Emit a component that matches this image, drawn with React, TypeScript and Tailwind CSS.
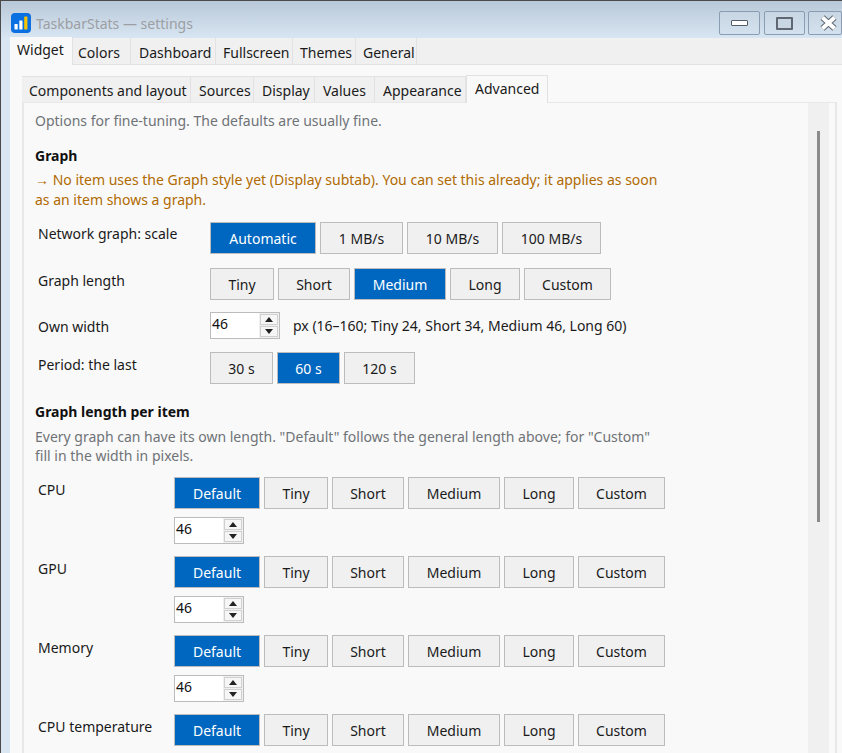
import React from 'react';

const mainTabs = [
  { label: 'Widget', cls: 'w-[63px] pl-[7px] h-[28px] bg-[#f9f9f9] border-b-0 -mb-[1px] pt-[3px]' },
  { label: 'Colors', cls: 'w-[58px] pl-[5px] h-[26px] bg-[#f0f0f0] pt-[5px]' },
  { label: 'Dashboard', cls: 'w-[85px] pl-[8px] h-[26px] bg-[#f0f0f0] pt-[5px]' },
  { label: 'Fullscreen', cls: 'w-[77px] pl-[7px] h-[26px] bg-[#f0f0f0] pt-[5px]' },
  { label: 'Themes', cls: 'w-[63px] pl-[7px] h-[26px] bg-[#f0f0f0] pt-[5px]' },
  { label: 'General', cls: 'w-[61px] pl-[7px] h-[26px] bg-[#f0f0f0] pt-[5px]' },
];

const subTabs = [
  { label: 'Components and layout', cls: 'w-[169px] pl-[7px]' },
  { label: 'Sources', cls: 'w-[63px] pl-[8px]' },
  { label: 'Display', cls: 'w-[61px] pl-[8px]' },
  { label: 'Values', cls: 'w-[60px] pl-[8px]' },
  { label: 'Appearance', cls: 'w-[91px] pl-[8px]' },
];

interface Opt {
  label: string;
  w: string;
  active?: boolean;
}

const OptionRow: React.FC<{ options: Opt[] }> = ({ options }) => (
  <div className="flex gap-[4px]">
    {options.map((o) => (
      <button
        key={o.label}
        className={`h-[32px] border border-[#bcbcbc] pt-[1px] text-center ${o.w} ${o.active ? 'bg-[#0067c0] text-white' : 'bg-[#f0f0f0] text-[#1a1a1a]'}`}
      >
        {o.label}
      </button>
    ))}
  </div>
);

const SpinBox: React.FC = () => (
  <div className="flex h-[27px] w-[70px] items-stretch border border-[#bcbcbc] bg-white">
    <span className="flex-1 pl-[1px] leading-[22px] text-[#111]">46</span>
    <div className="flex w-[20px] flex-col gap-[1px] bg-[#f0f0f0] px-[1px] py-[1px]">
      <div className="flex h-[11px] items-center justify-center border border-[#d0d0d0] bg-[#f6f6f6]">
        <svg width="8" height="5" viewBox="0 0 8 5"><path d="M4 0 L8 5 L0 5 Z" fill="#222" /></svg>
      </div>
      <div className="flex h-[11px] items-center justify-center border border-[#d0d0d0] bg-[#f6f6f6]">
        <svg width="8" height="5" viewBox="0 0 8 5"><path d="M0 0 L8 0 L4 5 Z" fill="#222" /></svg>
      </div>
    </div>
  </div>
);

const perItemOptions: Opt[] = [
  { label: 'Default', w: 'w-[86px]', active: true },
  { label: 'Tiny', w: 'w-[64px]' },
  { label: 'Short', w: 'w-[72px]' },
  { label: 'Medium', w: 'w-[92px]' },
  { label: 'Long', w: 'w-[70px]' },
  { label: 'Custom', w: 'w-[87px]' },
];

const PerItem: React.FC<{ label: string; spin?: boolean }> = ({ label, spin = true }) => (
  <div className="flex h-[79px]">
    <div className="w-[139px] pl-[3px] pt-[3px] leading-[20px]">{label}</div>
    <div className="flex flex-col gap-[8px]">
      <OptionRow options={perItemOptions} />
      {spin && <SpinBox />}
    </div>
  </div>
);

const WinButton: React.FC<{ children: React.ReactNode; w: string }> = ({ children, w }) => (
  <div className={`flex h-[24px] items-center justify-center rounded-[2px] border border-[#8b9db3] bg-gradient-to-b from-[#c8d5e3] to-[#d3e0ee] ${w}`}>
    {children}
  </div>
);

export default function App() {
  return (
    <div
      className="flex h-[753px] w-[842px] flex-col overflow-hidden border-l border-t border-[#4a4a4a] bg-[#dae7f3] text-[14px] text-[#1a1a1a]"
      style={{ fontFamily: '"Noto Sans", "Open Sans", sans-serif' }}
    >
      {/* title bar */}
      <div className="flex h-[37px] shrink-0 items-start bg-gradient-to-b from-[#b9c8d8] to-[#d8e6f3] pl-[10px] pt-[10px]">
        <svg width="20" height="20" viewBox="0 0 20 20" className="mt-[2px] shrink-0">
          <rect width="20" height="20" rx="4" fill="#0a6fe0" />
          <rect x="3.5" y="11" width="3.2" height="5.5" rx="0.6" fill="#ffffff" />
          <rect x="8.3" y="7.5" width="3.2" height="9" rx="0.6" fill="#ffffff" />
          <rect x="13.2" y="3.5" width="3.2" height="13" rx="0.6" fill="#f7c600" />
        </svg>
        <span className="ml-[5px] mt-[2px] text-[14px] leading-[22px] text-[#9c9fa3]">TaskbarStats — settings</span>
        <div className="ml-auto flex">
          <WinButton w="w-[41px] mr-[4px]">
            <div className="h-[6px] w-[17px] rounded-[1px] border border-[#555e68] bg-white" />
          </WinButton>
          <WinButton w="w-[41px] mr-[3px]">
            <div className="h-[13px] w-[17px] rounded-[1px] border-[2px] border-[#5f6872] bg-[#c9d6e4]" />
          </WinButton>
          <WinButton w="w-[34px]">
            <svg width="19" height="16" viewBox="0 0 19 16" className="ml-[6px] shrink-0">
              <path d="M3.5 2.5 L15.5 13.5 M15.5 2.5 L3.5 13.5" stroke="#5f6872" strokeWidth="6" />
              <path d="M3.5 2.5 L15.5 13.5 M15.5 2.5 L3.5 13.5" stroke="#ffffff" strokeWidth="4" />
            </svg>
          </WinButton>
        </div>
      </div>

      {/* window body */}
      <div className="ml-[9px] flex min-h-0 flex-1 flex-col bg-[#f9f9f9]">
        <div className="relative z-20 flex h-[27px] shrink-0 items-end border-b border-[#e2e2e2] bg-[#f0f0f0]">
          {mainTabs.map((t) => (
            <div key={t.label} className={`border-r border-[#e2e2e2] leading-[20px] ${t.cls}`}>
              {t.label}
            </div>
          ))}
        </div>

        {/* sub tabs */}
        <div className="ml-[12px] mr-[5px] flex min-h-0 flex-1 flex-col pt-[9px]">
          <div className="relative z-10 flex h-[28px] shrink-0 items-end">
            {subTabs.map((t) => (
              <div key={t.label} className={`h-[26px] whitespace-nowrap border-r border-t border-[#e2e2e2] bg-[#f0f0f0] leading-[27px] ${t.cls}`}>
                {t.label}
              </div>
            ))}
            <div className="-mb-[1px] h-[28px] w-[82px] border-l border-r border-t border-[#e2e2e2] bg-[#f9f9f9] pl-[8px] leading-[26px]">
              Advanced
            </div>
          </div>

          {/* page */}
          <div className="flex min-h-0 flex-1 border-l-2 border-r-2 border-t border-[#e8e8e8] bg-[#f9f9f9] pr-[6px]">
            <div className="min-w-0 flex-1 overflow-hidden pl-[11px] pt-[7px]">
              <p className="leading-[22px] text-[#6f7377]">Options for fine-tuning. The defaults are usually fine.</p>

              <h2 className="mt-[13px] font-bold leading-[22px] text-[#111]">Graph</h2>
              <p className="mt-[3px] w-[640px] leading-[20px] text-[#b06a00]">
                → No item uses the Graph style yet (Display subtab). You can set this already; it applies as soon as an item shows a graph.
              </p>

              <div className="mt-[12px] flex">
                <div className="w-[175px] pl-[3px] leading-[24px]">Network graph: scale</div>
                <OptionRow
                  options={[
                    { label: 'Automatic', w: 'w-[106px]', active: true },
                    { label: '1 MB/s', w: 'w-[83px]' },
                    { label: '10 MB/s', w: 'w-[91px]' },
                    { label: '100 MB/s', w: 'w-[99px]' },
                  ]}
                />
              </div>
              <div className="mt-[14px] flex">
                <div className="w-[175px] pl-[3px] leading-[26px]">Graph length</div>
                <OptionRow
                  options={[
                    { label: 'Tiny', w: 'w-[64px]' },
                    { label: 'Short', w: 'w-[72px]' },
                    { label: 'Medium', w: 'w-[92px]', active: true },
                    { label: 'Long', w: 'w-[70px]' },
                    { label: 'Custom', w: 'w-[87px]' },
                  ]}
                />
              </div>
              <div className="mt-[12px] flex items-center">
                <div className="w-[175px] pl-[3px] pt-[2px]">Own width</div>
                <SpinBox />
                <span className="ml-[13px] -mt-[1px]">px (16–160; Tiny 24, Short 34, Medium 46, Long 60)</span>
              </div>
              <div className="mt-[13px] flex">
                <div className="w-[175px] pl-[3px] leading-[26px]">Period: the last</div>
                <OptionRow
                  options={[
                    { label: '30 s', w: 'w-[63px]' },
                    { label: '60 s', w: 'w-[63px]', active: true },
                    { label: '120 s', w: 'w-[71px]' },
                  ]}
                />
              </div>

              <h2 className="mt-[17px] font-bold leading-[22px] text-[#111]">Graph length per item</h2>
              <p className="mt-[4px] w-[625px] leading-[19px] text-[#6f7377]">
                Every graph can have its own length. "Default" follows the general length above; for "Custom" fill in the width in pixels.
              </p>
              <div className="mt-[12px] overflow-hidden">
                <PerItem label="CPU" />
                <PerItem label="GPU" />
                <PerItem label="Memory" />
                <PerItem label="CPU temperature" spin={false} />
              </div>
            </div>

            {/* scrollbar */}
            <div className="w-[21px] shrink-0 bg-[#f0f0f0] pl-[9px] pt-[28px]">
              <div className="h-[391px] w-[3px] bg-[#8a8a8a]" />
            </div>
          </div>
        </div>
      </div>
    </div>
  );
}
